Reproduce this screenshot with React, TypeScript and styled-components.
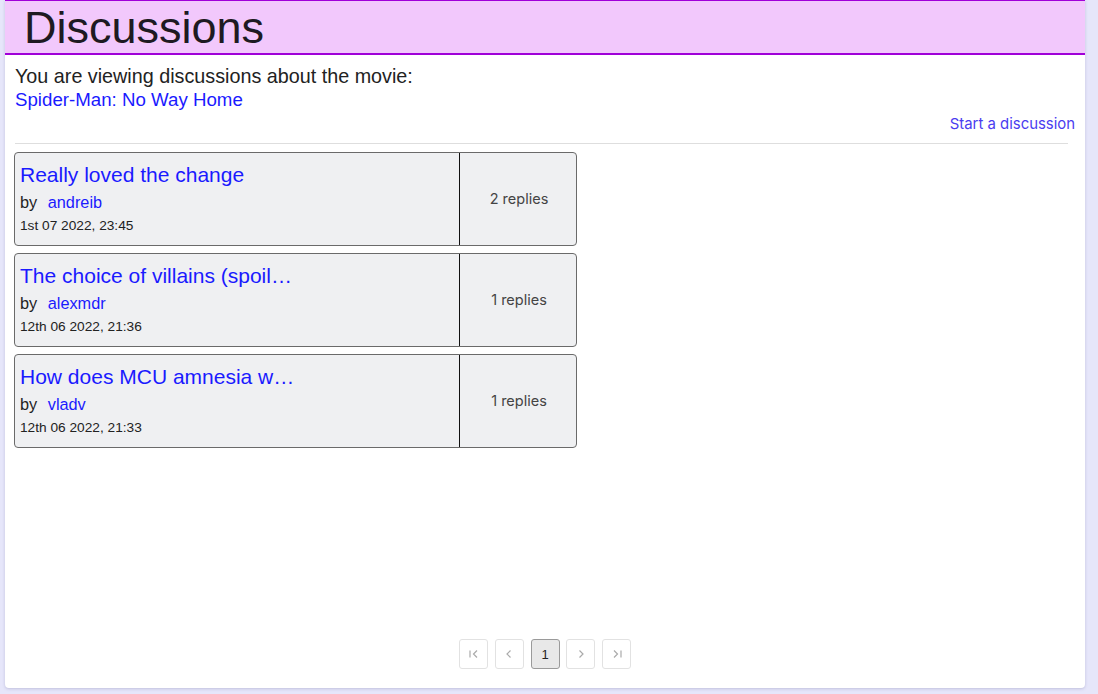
import React from 'react';
import styled, { createGlobalStyle } from 'styled-components';

const GlobalStyle = createGlobalStyle`
  html, body {
    margin: 0;
    padding: 0;
    background: #e6e6fa;
    font-family: "Liberation Sans", Arial, sans-serif;
  }
`;

interface Discussion {
  title: string;
  author: string;
  date: string;
  replies: number;
}

const discussions: Discussion[] = [
  { title: 'Really loved the change', author: 'andreib', date: '1st 07 2022, 23:45', replies: 2 },
  { title: 'The choice of villains (spoil…', author: 'alexmdr', date: '12th 06 2022, 21:36', replies: 1 },
  { title: 'How does MCU amnesia w…', author: 'vladv', date: '12th 06 2022, 21:33', replies: 1 },
];

const App: React.FC = () => {
  return (
    <Page>
      <GlobalStyle />
      <Card>
        <Header>
          <Title>Discussions</Title>
        </Header>
        <Body>
          <Intro>You are viewing discussions about the movie:</Intro>
          <MovieLink href="#">Spider-Man: No Way Home</MovieLink>
          <Actions>
            <StartLink href="#">Start a discussion</StartLink>
          </Actions>
          <Divider />
          <List>
            {discussions.map((d) => (
              <Item key={d.title}>
                <Main>
                  <ItemTitle href="#">{d.title}</ItemTitle>
                  <ByLine>
                    by <Author href="#">{d.author}</Author>
                  </ByLine>
                  <DateText>{d.date}</DateText>
                </Main>
                <Replies>{d.replies} replies</Replies>
              </Item>
            ))}
          </List>
        </Body>
        <Pagination>
          <PageButton>
            <svg width="12" height="12" viewBox="0 0 12 12" fill="none" stroke="currentColor" strokeWidth="1.2">
              <path d="M2 2.5v7M9 2.5L5.5 6 9 9.5" />
            </svg>
          </PageButton>
          <PageButton>
            <svg width="12" height="12" viewBox="0 0 12 12" fill="none" stroke="currentColor" strokeWidth="1.2">
              <path d="M7.5 2.5L4 6l3.5 3.5" />
            </svg>
          </PageButton>
          <PageButton $active>1</PageButton>
          <PageButton>
            <svg width="12" height="12" viewBox="0 0 12 12" fill="none" stroke="currentColor" strokeWidth="1.2">
              <path d="M4.5 2.5L8 6l-3.5 3.5" />
            </svg>
          </PageButton>
          <PageButton>
            <svg width="12" height="12" viewBox="0 0 12 12" fill="none" stroke="currentColor" strokeWidth="1.2">
              <path d="M3 2.5L6.5 6 3 9.5M10 2.5v7" />
            </svg>
          </PageButton>
        </Pagination>
      </Card>
    </Page>
  );
};

const Page = styled.div`
  padding: 0 13px 6px 5px;
  min-height: 694px;
  box-sizing: border-box;
`;

const Card = styled.div`
  background: #ffffff;
  height: 688px;
  display: flex;
  flex-direction: column;
  border-radius: 0 0 4px 4px;
  box-shadow: 0 1px 3px rgba(80, 80, 140, 0.25);
`;

const Header = styled.div`
  background: #f2c8fc;
  border-top: 1px solid #a000d8;
  border-bottom: 2px solid #a000d8;
  height: 52px;
  padding-left: 19px;
  display: flex;
  align-items: center;
`;

const Title = styled.h1`
  margin: 0;
  font-size: 45px;
  font-weight: 400;
  color: #1e1a22;
  line-height: 1;
  padding-top: 1px;
`;

const Body = styled.div`
  padding: 9px 10px 0 9px;
  flex: 1;
`;

const Intro = styled.div`
  font-size: 19.75px;
  color: #222;
  line-height: 24px;
  padding-left: 1px;
`;

const MovieLink = styled.a`
  display: inline-block;
  font-size: 18.7px;
  color: #1a1aff;
  text-decoration: none;
  line-height: 24px;
  padding-left: 1px;
`;

const Actions = styled.div`
  display: flex;
  justify-content: flex-end;
`;

const StartLink = styled.a`
  font-family: Inter, "Liberation Sans", sans-serif;
  font-size: 14.9px;
  color: #4a3cf0;
  text-decoration: none;
  line-height: 24px;
`;

const Divider = styled.hr`
  border: none;
  border-top: 1px solid #dedede;
  margin: 7px 7px 8px 1px;
`;

const List = styled.div`
  display: flex;
  flex-direction: column;
  gap: 7px;
`;

const Item = styled.div`
  display: flex;
  width: 561px;
  height: 92px;
  background: #eff0f2;
  border: 1px solid #6a6a6a;
  border-radius: 4px;
`;

const Main = styled.div`
  width: 439px;
  border-right: 1px solid #111;
  padding: 9px 0 0 5px;
  display: flex;
  flex-direction: column;
`;

const ItemTitle = styled.a`
  font-size: 21px;
  color: #1a1aff;
  text-decoration: none;
  line-height: 26px;
`;

const ByLine = styled.div`
  font-size: 16.3px;
  color: #222;
  line-height: 22px;
  margin-top: 3px;
`;

const Author = styled.a`
  color: #1a1aff;
  text-decoration: none;
  margin-left: 6px;
`;

const DateText = styled.div`
  font-size: 13.7px;
  color: #222;
  line-height: 20px;
  margin-top: 3px;
`;

const Replies = styled.div`
  flex: 1;
  display: flex;
  align-items: center;
  justify-content: center;
  font-family: Inter, "Liberation Sans", sans-serif;
  font-size: 14.5px;
  color: #444;
  padding: 0 0 2px 2px;
`;

const Pagination = styled.div`
  display: flex;
  justify-content: center;
  gap: 6.75px;
  padding: 0 0 19px 0;
`;

const PageButton = styled.button<{ $active?: boolean }>`
  width: 29px;
  height: 30px;
  display: flex;
  align-items: center;
  justify-content: center;
  padding: 0;
  border-radius: 3px;
  font-family: "Liberation Sans", Arial, sans-serif;
  font-size: 13px;
  color: ${(p) => (p.$active ? '#222' : '#aaa')};
  background: ${(p) => (p.$active ? '#e8e8e8' : '#fff')};
  border: 1px solid ${(p) => (p.$active ? '#9a9a9a' : '#e2e2e2')};
`;

export default App;
